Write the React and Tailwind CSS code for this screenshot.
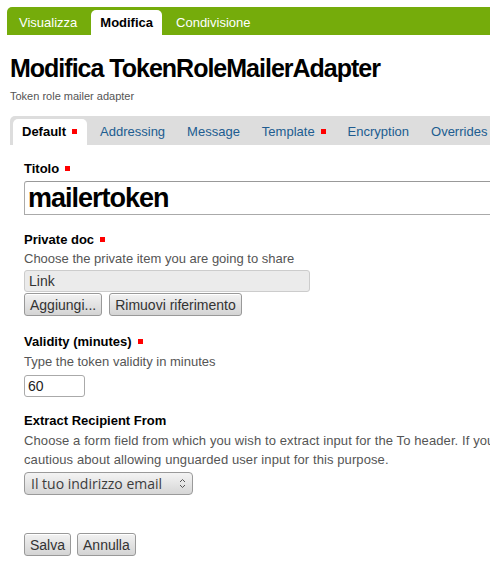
import React from "react";

const Req = () => <span className="inline-block w-[5px] h-[5px] bg-[#ff0000] ml-[6px] align-middle relative -top-[1px]" />;

const Btn = ({ children }) => (
  <button className="h-[23px] px-[5px] text-[14px] leading-none text-[#333] border border-[#999] rounded-[3px] bg-gradient-to-b from-[#f2f2f2] to-[#d4d4d4] shadow-[inset_0_1px_0_#fff]">
    {children}
  </button>
);

const Label = ({ children, req }) => (
  <div className="text-[13px] font-bold text-black leading-[16px]">
    {children}
    {req && <Req />}
  </div>
);

const Help = ({ children }) => <div className="text-[13px] text-[#555] leading-[19px]">{children}</div>;

export default function App() {
  const subTabs = ["Addressing", "Message", "Template", "Encryption", "Overrides"];
  return (
    <div className="w-[490px] h-[576px] overflow-hidden bg-white font-['Liberation_Sans',Arial,sans-serif]">
      {/* top green tabs */}
      <div className="ml-[7px] mt-[7px] h-[28px] w-[600px] bg-[#75ac0b] rounded-tl-[5px] flex items-end pl-[12px] text-[13px] leading-[15px]">
        <span className="text-white mr-[14px] h-[25px] pt-[5px]">Visualizza</span>
        <span className="bg-white h-[25px] rounded-t-[5px] px-[9px] pt-[5px] font-bold text-black">Modifica</span>
        <span className="text-white ml-[14px] h-[25px] pt-[5px]">Condivisione</span>
      </div>

      <h1 className="ml-[10px] mt-[19px] text-[25px] font-bold tracking-[-1px] leading-[28px] text-black">
        Modifica TokenRoleMailerAdapter
      </h1>
      <div className="ml-[10px] mt-[7px] text-[11px] text-[#555] leading-[14px]">Token role mailer adapter</div>

      {/* sub tabs */}
      <div className="ml-[10px] mt-[13px] h-[29px] w-[600px] bg-[#dddddd] rounded-tl-[5px] flex items-end pl-[3px] text-[13px] leading-[15px]">
        <span className="bg-white h-[26px] rounded-t-[5px] pl-[9px] pr-[10px] pt-[5px] mr-[2px] font-bold text-black">
          Default
          <Req />
        </span>
        {subTabs.map((t) => (
          <span key={t} className="px-[11px] h-[26px] pt-[5px] text-[#205c90]">
            {t}
            {t === "Template" && <Req />}
          </span>
        ))}
      </div>

      <div className="pl-[24px] pt-[16px]">
        <Label req>Titolo</Label>
        <div className="mt-[4px] h-[34px] w-[600px] border border-[#aaa] border-t-[#999] rounded-tl-[3px] flex items-center pl-[3px] text-[27px] font-bold tracking-[-1px] text-black">
          mailertoken
        </div>

        <div className="mt-[17px]">
          <Label req>Private doc</Label>
          <div className="mt-[1px]"><Help>Choose the private item you are going to share</Help></div>
          <div className="mt-[2px] h-[22px] w-[286px] bg-[#ebebeb] border border-[#ccc] rounded-[3px] flex items-center pl-[4px] text-[14px] text-[#333]">
            Link
          </div>
          <div className="mt-[1px] flex gap-[7px]">
            <Btn>Aggiungi...</Btn>
            <Btn>Rimuovi riferimento</Btn>
          </div>
        </div>

        <div className="mt-[18px]">
          <Label req>Validity (minutes)</Label>
          <div className="mt-[2px]"><Help>Type the token validity in minutes</Help></div>
          <div className="mt-[4px] h-[22px] w-[61px] border border-[#aaa] rounded-[3px] flex items-center pl-[3px] text-[14px] text-[#222]">
            60
          </div>
        </div>

        <div className="mt-[16px]">
          <Label>Extract Recipient From</Label>
          <div className="mt-[2px]">
            <Help>
              <span className="block whitespace-nowrap tracking-[0.1px]">
                Choose a form field from which you wish to extract input for the To header. If you choose anything other than "None", this will override the "Recipient's e-mail address" setting above. Be very
              </span>
              <span className="block whitespace-nowrap tracking-[0.1px]">cautious about allowing unguarded user input for this purpose.</span>
            </Help>
          </div>
          <div className="mt-[3px] h-[23px] w-[169px] border border-[#9a9a9a] rounded-[4px] bg-gradient-to-b from-[#f4f4f4] to-[#d6d6d6] flex items-center justify-between pl-[6px] pr-[6px] text-[14px] text-[#3c3c3c] font-['Open_Sans',sans-serif]">
            <span>Il tuo indirizzo email</span>
            <svg width="7" height="11" viewBox="0 0 7 11">
              <path d="M1 4 L3.5 1.5 L6 4" fill="none" stroke="#555" strokeWidth="1" />
              <path d="M1 7 L3.5 9.5 L6 7" fill="none" stroke="#555" strokeWidth="1" />
            </svg>
          </div>
        </div>

        <div className="mt-[38px] flex gap-[6px]">
          <Btn>Salva</Btn>
          <Btn>Annulla</Btn>
        </div>
      </div>
    </div>
  );
}
